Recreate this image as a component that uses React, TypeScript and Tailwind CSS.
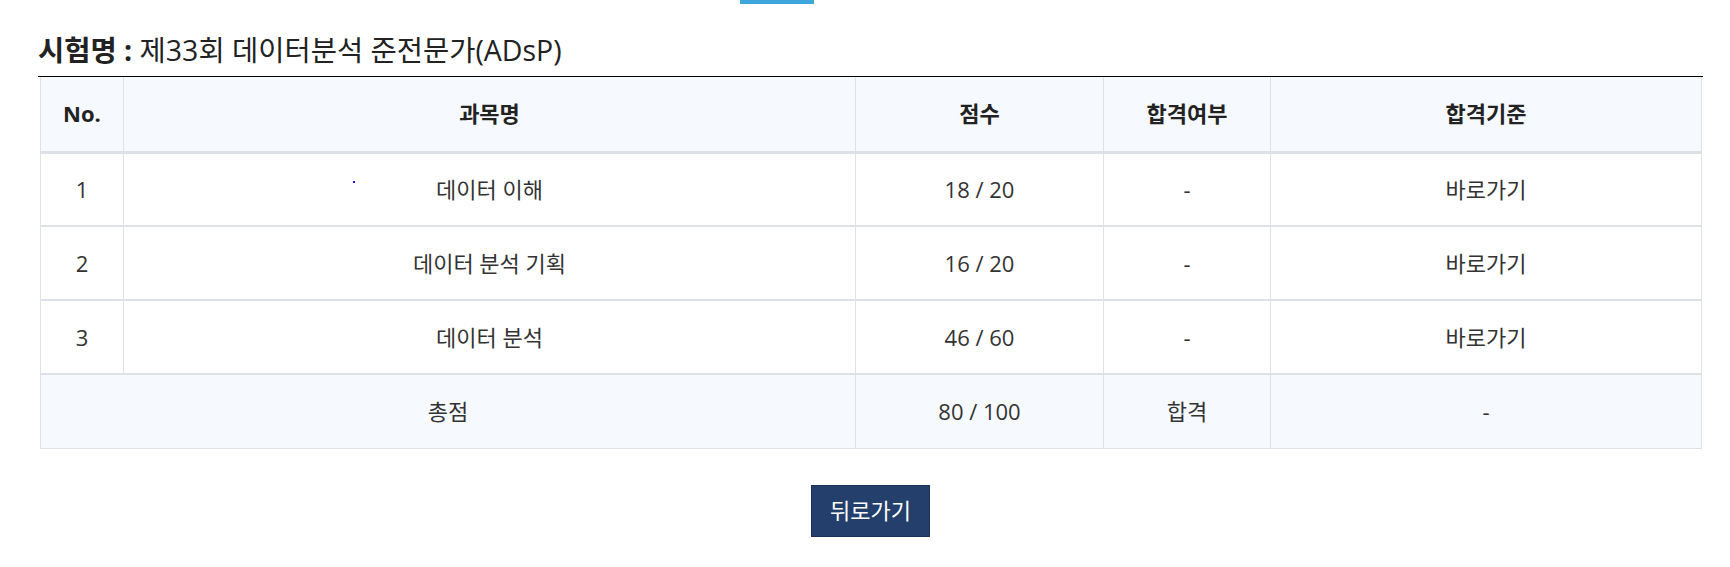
const rows = [
  { no: "1", name: "데이터 이해", score: "18 / 20", pass: "-", link: "바로가기" },
  { no: "2", name: "데이터 분석 기획", score: "16 / 20", pass: "-", link: "바로가기" },
  { no: "3", name: "데이터 분석", score: "46 / 60", pass: "-", link: "바로가기" },
];

const cell = "border-x border-[#dee2e6] text-center align-middle";

const App = () => {
  return (
    <div
      className="w-full min-h-[567px] bg-white text-[#333]"
      style={{ fontFamily: '"Open Sans", "Noto Sans CJK KR", sans-serif' }}
    >
      <div className="ml-[740px] w-[74px] h-[4px] bg-[#3fa6dd]" />

      <div className="ml-[38px] w-[1665px]">
        <h2 className="mt-[28px] h-[36px] leading-[36px] text-[28.5px] text-[#222]">
          <span className="font-bold">시험명 :</span> 제33회 데이터분석 준전문가(ADsP)
        </h2>

        <div className="mt-[8px] border-t border-black pl-[2px] pr-px">
          <table className="w-full border-collapse text-[22px] border-b border-[#dee2e6]">
            <colgroup>
              <col className="w-[83px]" />
              <col className="w-[732px]" />
              <col className="w-[248px]" />
              <col className="w-[167px]" />
              <col />
            </colgroup>
            <thead>
              <tr className="h-[75px] bg-[#f6f9fe] border-b-[3px] border-[#dee2e6]">
                <th className={`${cell} font-bold text-[#222]`}>No.</th>
                <th className={`${cell} font-bold text-[#222]`}>과목명</th>
                <th className={`${cell} font-bold text-[#222]`}>점수</th>
                <th className={`${cell} font-bold text-[#222]`}>합격여부</th>
                <th className={`${cell} font-bold text-[#222]`}>합격기준</th>
              </tr>
            </thead>
            <tbody>
              {rows.map((r, i) => (
                <tr key={r.no} className="h-[74px] border-b-2 border-[#dee2e6]">
                  <td className={cell}>{r.no}</td>
                  <td className={`${cell} relative`}>
                    {i === 0 && (
                      <span className="absolute left-[229px] top-[27px] w-[2px] h-[2px] bg-[#1a1ad6]" />
                    )}
                    {r.name}
                  </td>
                  <td className={cell}>{r.score}</td>
                  <td className={cell}>{r.pass}</td>
                  <td className={cell}>{r.link}</td>
                </tr>
              ))}
              <tr className="h-[74px] bg-[#f6f9fe]">
                <td className={cell} colSpan={2}>
                  총점
                </td>
                <td className={cell}>80 / 100</td>
                <td className={cell}>합격</td>
                <td className={cell}>-</td>
              </tr>
            </tbody>
          </table>
        </div>

        <div className="mt-[36px] flex justify-center">
          <button className="h-[52px] px-[18px] bg-[#243f6c] border border-[#1b305a] text-white text-[22px]">
            뒤로가기
          </button>
        </div>
      </div>
    </div>
  );
};

export default App;
